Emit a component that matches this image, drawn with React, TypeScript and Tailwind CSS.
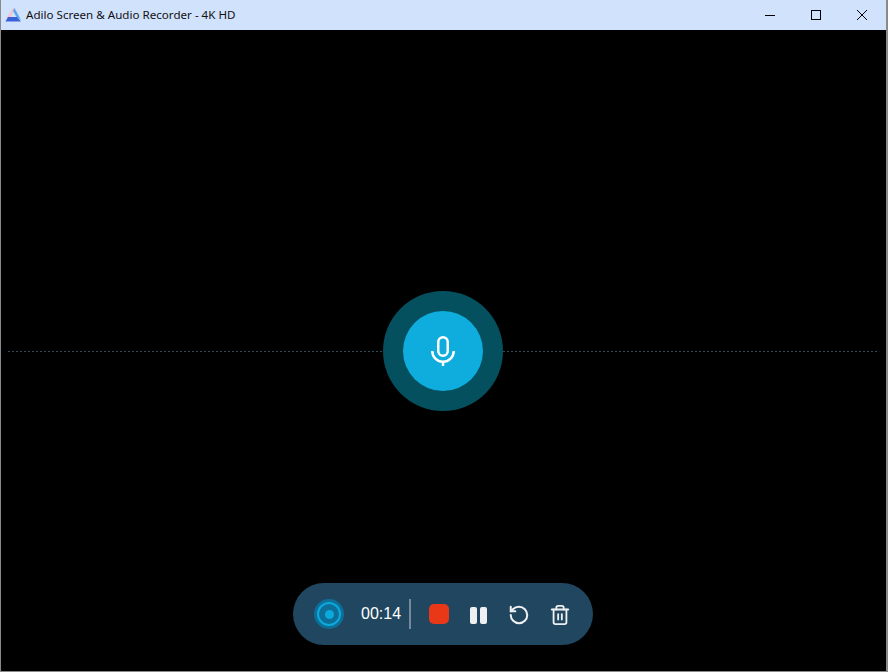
import { RotateCcw, Trash2 } from "lucide-react";

function Logo() {
  return (
    <svg width="17" height="14" viewBox="0 0 17 14" className="shrink-0">
      <polygon points="8,0 9.5,0 5.5,10 1.5,10" fill="#f5c3cc" />
      <polygon points="9.5,0 16,12 11.5,9 8,3" fill="#5aa9f0" />
      <polygon points="3,9 12,9 16,13.5 0.5,13.5" fill="#3a62d8" />
    </svg>
  );
}

function TitleBar() {
  return (
    <div className="h-[30px] shrink-0 flex items-center bg-[#d1e2fd] pl-[4px] pr-px">
      <Logo />
      <span className="ml-[4px] text-[11.6px] text-[#111] font-['Noto_Sans','Open_Sans',sans-serif]">
        Adilo Screen &amp; Audio Recorder - 4K HD
      </span>
      <div className="ml-auto flex items-center text-black">
        <div className="w-[46px] flex justify-center">
          <svg width="10" height="10" viewBox="0 0 10 10" stroke="currentColor" fill="none">
            <path d="M0 5.5H10" />
          </svg>
        </div>
        <div className="w-[46px] flex justify-center">
          <svg width="10" height="10" viewBox="0 0 10 10" stroke="currentColor" fill="none">
            <rect x="0.5" y="0.5" width="9" height="9" />
          </svg>
        </div>
        <div className="w-[46px] flex justify-center">
          <svg width="10" height="10" viewBox="0 0 10 10" stroke="currentColor" fill="none">
            <path d="M0 0L10 10M10 0L0 10" />
          </svg>
        </div>
      </div>
    </div>
  );
}

function DottedLine() {
  return (
    <div className="flex-1 h-px bg-[repeating-linear-gradient(90deg,#34495a_0,#34495a_2px,transparent_2px,transparent_4px)]" />
  );
}

function MicIcon() {
  return (
    <svg width="24" height="30" viewBox="0 0 24 30" fill="none" stroke="white" strokeWidth="2.5">
      <rect x="7.25" y="1.25" width="9.5" height="18.5" rx="4.75" />
      <path d="M1.25 15A10.75 10.75 0 0 0 22.75 15" />
      <path d="M12 26V30" />
    </svg>
  );
}

export default function App() {
  return (
    <div className="w-[888px] h-[672px] flex flex-col bg-black border-l border-b border-r-2 border-[#8a8a8a] overflow-hidden">
      <TitleBar />
      <div className="flex-1 flex flex-col items-center">
        <div className="w-full h-[120px] mt-[261px] flex items-center pl-[7px] pr-[9px]">
          <DottedLine />
          <div className="w-[120px] h-[120px] rounded-full bg-[#04505f] flex items-center justify-center">
            <div className="w-[80px] h-[80px] rounded-full bg-[#0eaddd] flex items-center justify-center">
              <MicIcon />
            </div>
          </div>
          <DottedLine />
        </div>
        <div className="mt-[172px] ml-[-1px] w-[300px] h-[62px] rounded-full bg-[#20475f] flex items-center pl-[21px] text-white">
          <div className="w-[30px] h-[30px] rounded-full bg-[#0d6f98] flex items-center justify-center">
            <div className="w-[24px] h-[24px] rounded-full border-2 border-[#0ba9dc] flex items-center justify-center">
              <div className="w-[9px] h-[9px] rounded-full bg-[#0ba9dc]" />
            </div>
          </div>
          <span className="ml-[17px] text-[16px] font-['Liberation_Sans',sans-serif]">00:14</span>
          <div className="ml-[8px] w-[2px] h-[30px] bg-[#74899a]" />
          <div className="ml-[18px] w-[20px] h-[20px] rounded-[5px] bg-[#e93817]" />
          <div className="ml-[21px] mt-[3px] flex gap-[3px]">
            <div className="w-[7px] h-[17px] rounded-[2px] bg-[#eef0f2]" />
            <div className="w-[7px] h-[17px] rounded-[2px] bg-[#eef0f2]" />
          </div>
          <RotateCcw size={22} strokeWidth={2.2} className="ml-[21px] mt-[2px] text-[#eef0f2]" />
          <Trash2 size={22} strokeWidth={2} className="ml-[19px] mt-[2px] text-[#eef0f2]" />
        </div>
      </div>
    </div>
  );
}
